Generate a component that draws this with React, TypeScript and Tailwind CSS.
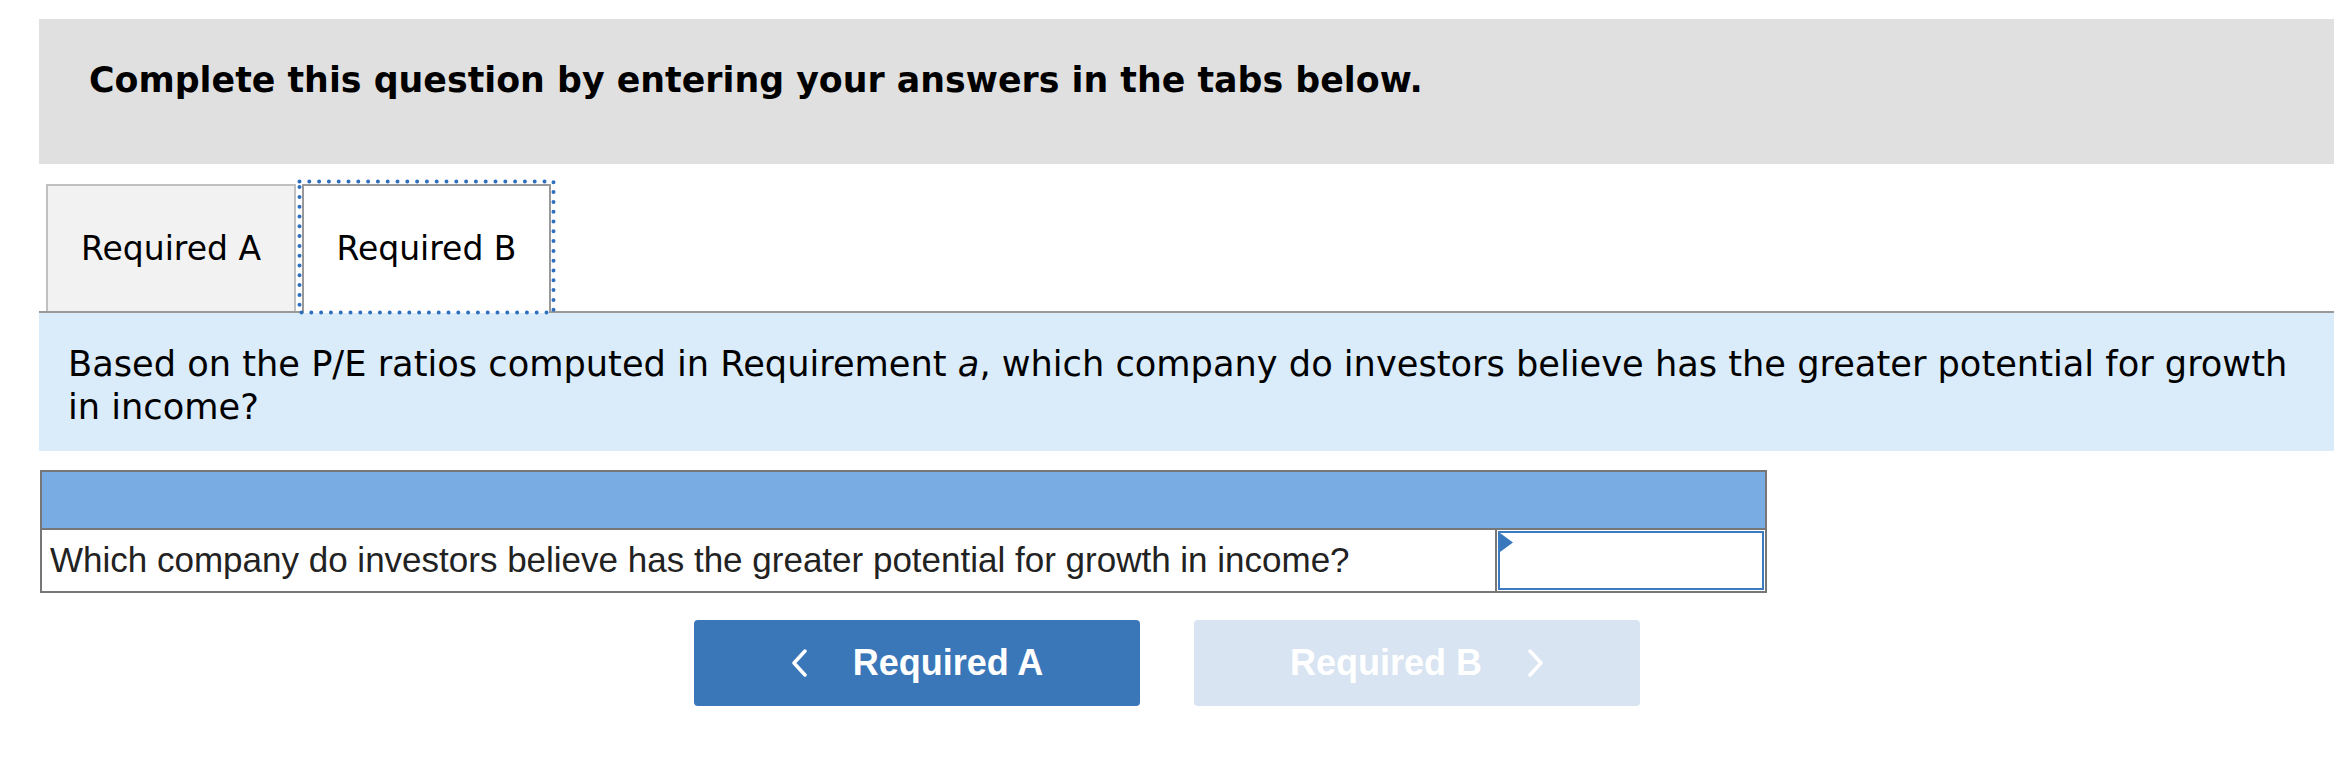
import React from 'react';

/**
 * Aba + área da pergunta (Required B)
 * Medidas tiradas da captura em 2334x767
 */
function FocusRing() {
  // anel pontilhado de foco em volta da aba ativa
  return (
    <svg
      className="pointer-events-none absolute left-[-6px] top-[-6px] h-[134px] w-[257px] overflow-visible"
      viewBox="0 0 257 134"
    >
      <rect
        x="1.5"
        y="1.5"
        width="254"
        height="131"
        fill="none"
        stroke="#2f6fbf"
        strokeWidth="4"
        strokeDasharray="0 9.8"
        strokeLinecap="round"
      />
    </svg>
  );
}

function Chevron({ dir }: { dir: 'left' | 'right' }) {
  return (
    <svg width="17" height="28" viewBox="0 0 17 28" fill="none">
      <polyline
        points={dir === 'left' ? '14,2 3,14 14,26' : '3,2 14,14 3,26'}
        stroke="#fff"
        strokeWidth="3.5"
        strokeLinecap="round"
        strokeLinejoin="round"
      />
    </svg>
  );
}

export default function App() {
  return (
    <div className="min-h-[767px] w-full bg-white">
      <div className="pl-[39px] pt-[19px]">
        {/* Cabeçalho cinza */}
        <div className="h-[145px] bg-[#e0e0e0] pl-[50px] pt-[41px]">
          <h2 className="font-['DejaVu_Sans',sans-serif] text-[34.8px] font-bold leading-[40px] text-black">
            Complete this question by entering your answers in the tabs below.
          </h2>
        </div>

        {/* Abas */}
        <div className="mt-[20px] flex items-end border-b-2 border-[#999] pl-[7px]">
          <button className="flex h-[127px] w-[250px] items-center justify-center border-2 border-b-0 border-[#c0c0c0] bg-[#f2f2f2] font-['DejaVu_Sans',sans-serif] text-[33px] text-black">
            Required A
          </button>
          <button className="relative -mb-[2px] ml-[6px] flex h-[129px] w-[249px] items-center justify-center border-2 border-b-0 border-[#999] bg-white pb-[2px] font-['DejaVu_Sans',sans-serif] text-[33px] text-black">
            Required B
            <FocusRing />
          </button>
        </div>

        {/* Enunciado */}
        <div className="bg-[#daebf9] pb-[23px] pl-[29px] pr-[30px] pt-[29px] font-['DejaVu_Sans',sans-serif] text-[35.2px] leading-[43px] text-black">
          Based on the P/E ratios computed in Requirement <i>a</i>, which company do investors believe has the greater potential for growth in income?
        </div>

        {/* Tabela de resposta */}
        <div className="ml-[1px] mt-[19px] w-[1727px] border-2 border-[#777]">
          <div className="h-[58px] border-b-2 border-[#777] bg-[#79ace3]"></div>
          <div className="flex h-[61px]">
            <div className="flex flex-1 items-center border-r-2 border-[#777] pl-[8px] font-['Liberation_Sans',Arial,sans-serif] text-[35px] text-[#222]">
              Which company do investors believe has the greater potential for growth in income?
            </div>
            <div className="w-[268px] p-[1px]">
              <div className="relative h-full w-full border-2 border-[#3d7bc0] bg-white">
                <svg className="absolute left-0 top-0" width="13" height="19" viewBox="0 0 13 19">
                  <polygon points="0,0 13,9.5 0,19" fill="#3a78bd" />
                </svg>
              </div>
            </div>
          </div>
        </div>
      </div>

      {/* Navegação */}
      <div className="mt-[27px] flex justify-center gap-[54px]">
        <button className="flex h-[86px] w-[446px] items-center justify-center gap-[45px] rounded-[4px] bg-[#3a77b9] font-['Liberation_Sans',Arial,sans-serif] text-[36px] font-bold text-white">
          <Chevron dir="left" />
          <span>Required A</span>
        </button>
        <button className="flex h-[86px] w-[446px] items-center justify-center gap-[45px] rounded-[4px] bg-[#d8e4f1] font-['Liberation_Sans',Arial,sans-serif] text-[36px] font-bold text-white">
          <span>Required B</span>
          <Chevron dir="right" />
        </button>
      </div>
    </div>
  );
}
